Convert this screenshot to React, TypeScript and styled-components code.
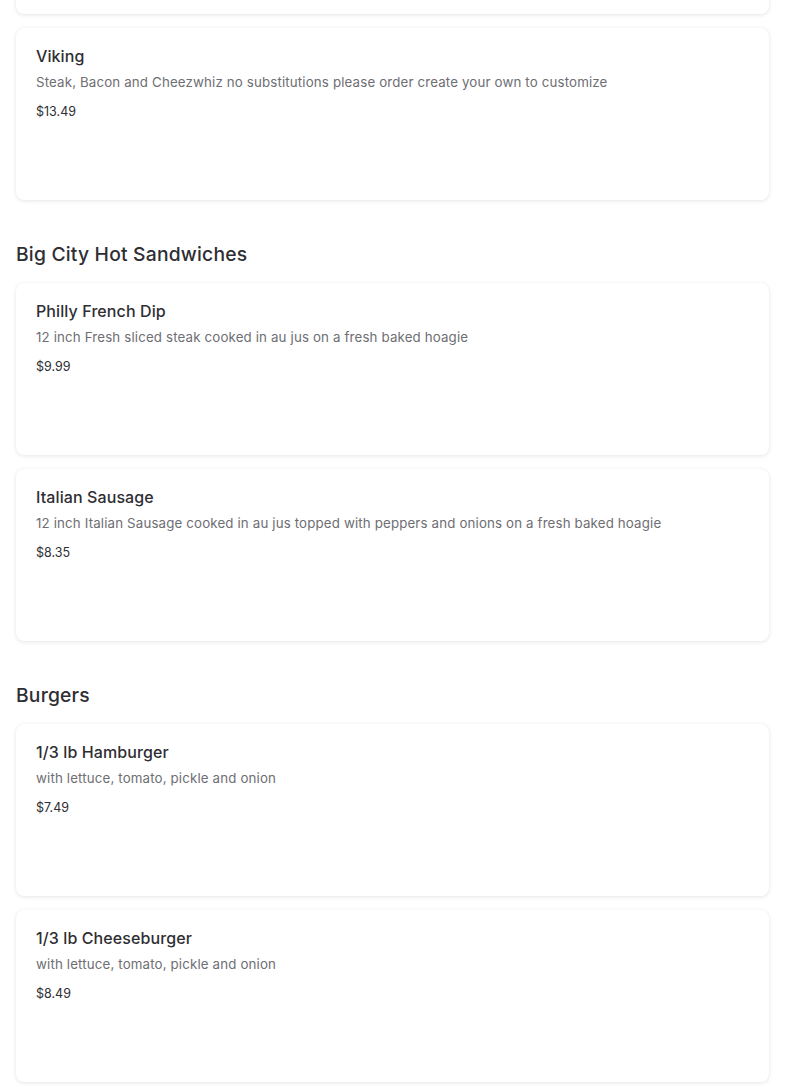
import styled, { createGlobalStyle } from "styled-components";

interface MenuItem {
  name: string;
  description: string;
  price: string;
}

interface Section {
  title?: string;
  items: MenuItem[];
}

// the first card is scrolled off the top: only its bottom edge shows
const sections: Section[] = [
  {
    items: [
      { name: "", description: "", price: "" },
      {
        name: "Viking",
        description:
          "Steak, Bacon and Cheezwhiz no substitutions please order create your own to customize",
        price: "$13.49",
      },
    ],
  },
  {
    title: "Big City Hot Sandwiches",
    items: [
      {
        name: "Philly French Dip",
        description: "12 inch Fresh sliced steak cooked in au jus on a fresh baked hoagie",
        price: "$9.99",
      },
      {
        name: "Italian Sausage",
        description:
          "12 inch Italian Sausage cooked in au jus topped with peppers and onions on a fresh baked hoagie",
        price: "$8.35",
      },
    ],
  },
  {
    title: "Burgers",
    items: [
      {
        name: "1/3 lb Hamburger",
        description: "with lettuce, tomato, pickle and onion",
        price: "$7.49",
      },
      {
        name: "1/3 lb Cheeseburger",
        description: "with lettuce, tomato, pickle and onion",
        price: "$8.49",
      },
    ],
  },
];

const GlobalStyle = createGlobalStyle`
  body {
    margin: 0;
    background: #fff;
    font-family: Inter, "Noto Sans", sans-serif;
    color: #2e2e33;
  }
`;

const Page = styled.main`
  padding: 0 16px 40px;
  overflow: hidden;
`;

const SectionBlock = styled.section<{ $first?: boolean }>`
  display: flex;
  flex-direction: column;
  gap: 14px;
  margin-top: ${(p) => (p.$first ? "-158px" : "40px")};
`;

const SectionTitle = styled.h2`
  margin: 0 0 1px;
  font-size: 19.3px;
  line-height: 28px;
  font-weight: 500;
  color: #2e2e33;
  letter-spacing: 0.2px;
`;

const Card = styled.article`
  height: 172px;
  box-sizing: border-box;
  padding: 18px 20px;
  background: #fff;
  border-radius: 8px;
  box-shadow: 0 1px 4px rgba(0, 0, 0, 0.1), 0 0 1px rgba(0, 0, 0, 0.05);
`;

const ItemName = styled.h3`
  margin: 0;
  min-height: 20px;
  font-size: 16px;
  line-height: 20px;
  font-weight: 500;
  color: #2e2e33;
  letter-spacing: 0.1px;
`;

const ItemDescription = styled.p`
  margin: 6px 0 0;
  font-size: 13.3px;
  line-height: 20px;
  color: #6e6e73;
  letter-spacing: 0.15px;
`;

const ItemPrice = styled.div`
  margin-top: 10px;
  font-size: 12.5px;
  line-height: 20px;
  color: #2e2e33;
`;

const App = () => {
  return (
    <>
      <GlobalStyle />
      <Page>
        {sections.map((section, i) => (
          <SectionBlock key={i} $first={i === 0}>
            {section.title && <SectionTitle>{section.title}</SectionTitle>}
            {section.items.map((item, j) => (
              <Card key={j}>
                {item.name && (
                  <>
                    <ItemName>{item.name}</ItemName>
                    <ItemDescription>{item.description}</ItemDescription>
                    <ItemPrice>{item.price}</ItemPrice>
                  </>
                )}
              </Card>
            ))}
          </SectionBlock>
        ))}
      </Page>
    </>
  );
};

export default App;
